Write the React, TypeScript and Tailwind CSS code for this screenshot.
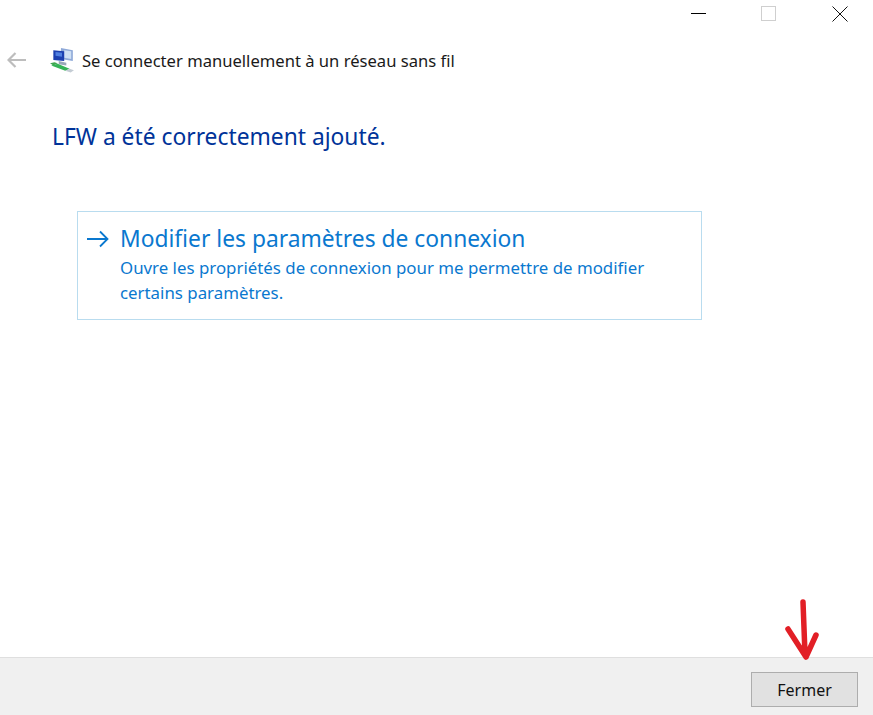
const font = { fontFamily: '"Noto Sans", "Open Sans", sans-serif' };

function NetworkIcon() {
  return (
    <svg width="26" height="26" viewBox="0 0 24 24" className="shrink-0">
      <path d="M11 1 L22 3 L22 13 L11 11 Z" fill="#8fa9d8" />
      <path d="M14 3 L20.5 4 L20.5 11 L14 10 Z" fill="#cfe0f4" />
      <path d="M4 3 L14 4 L14 13 L4 12 Z" fill="#1b3fb0" />
      <path d="M6 4.5 L12 5.2 L12 9 L6 8 Z" fill="#4f7fe0" />
      <path d="M9 13 L9 16 L16 17 L16 14.5 Z" fill="#9aa7b8" />
      <path d="M1 15 L5 14 L8 15 L4 17 Z" fill="#3fa64f" />
      <path d="M2 17 L8 15.5 L19 20 L15 22 Z" fill="#35b356" />
      <path d="M15 22 L19 20 L23 21.5 L20 23.5 Z" fill="#c4ccd4" />
    </svg>
  );
}

function RedArrow() {
  return (
    <svg width="44" height="66" viewBox="0 0 44 66" className="absolute right-[48px] top-[598px]">
      <path
        d="M22 4 L24 56 M7 31 L25 59 L35 37"
        fill="none"
        stroke="#e21f26"
        strokeWidth="5.5"
        strokeLinecap="round"
        strokeLinejoin="round"
      />
    </svg>
  );
}

export default function App() {
  return (
    <div className="relative flex h-[715px] w-[873px] flex-col overflow-hidden bg-white" style={font}>
      {/* Window controls */}
      <div className="flex h-[30px] items-start justify-end pt-[6px]">
        <div className="mt-[7px] h-px w-[15px] bg-black" />
        <div className="ml-[55px] h-[15px] w-[15px] border border-[#cfcfcf]" />
        <svg width="16" height="16" viewBox="0 0 16 16" className="ml-[56px] mr-[25px]">
          <path d="M0.5 0.5 L15.5 15.5 M15.5 0.5 L0.5 15.5" stroke="#111" strokeWidth="1" />
        </svg>
      </div>

      {/* Header */}
      <div className="flex h-[60px] items-center pl-[7px]">
        <svg width="19" height="16" viewBox="0 0 19 16" className="shrink-0">
          <path d="M19 8 L1.5 8 M8.5 1 L1.5 8 L8.5 15" fill="none" stroke="#bdbdbd" strokeWidth="2.2" />
        </svg>
        <div className="ml-[23px]">
          <NetworkIcon />
        </div>
        <span className="ml-[7px] mt-[1px] text-[16.6px] leading-6 text-[#1a1a1a]">Se connecter manuellement à un réseau sans fil</span>
      </div>

      {/* Content */}
      <div className="flex-1 pl-[52px]">
        <h1 className="mt-[33px] text-[22.8px] font-normal leading-7 text-[#003399]">LFW a été correctement ajouté.</h1>

        <div className="ml-[25px] mt-[60px] flex h-[109px] w-[625px] items-start border border-[#b9dcef] pl-[9px] pt-[11px] text-[#0a78cf]">
          <svg width="22" height="18" viewBox="0 0 22 18" className="mt-[7px] shrink-0">
            <path d="M0 9 L20.5 9 M13 1.5 L20.5 9 L13 16.5" fill="none" stroke="#0a78cf" strokeWidth="1.8" />
          </svg>
          <div className="ml-[11px]">
            <div className="text-[22.8px] leading-[32px]">Modifier les paramètres de connexion</div>
            <p className="text-[16.85px] leading-[25px]">
              Ouvre les propriétés de connexion pour me permettre de modifier
              <br />
              certains paramètres.
            </p>
          </div>
        </div>
      </div>

      {/* Footer */}
      <div className="flex h-[58px] items-start justify-end border-t border-[#dfdfdf] bg-[#f0f0f0] pr-[15px] pt-[14px]">
        <button className="h-[35px] w-[107px] border border-[#adadad] bg-[#e1e1e1] text-[16px] text-[#111]">Fermer</button>
      </div>

      <RedArrow />
    </div>
  );
}
